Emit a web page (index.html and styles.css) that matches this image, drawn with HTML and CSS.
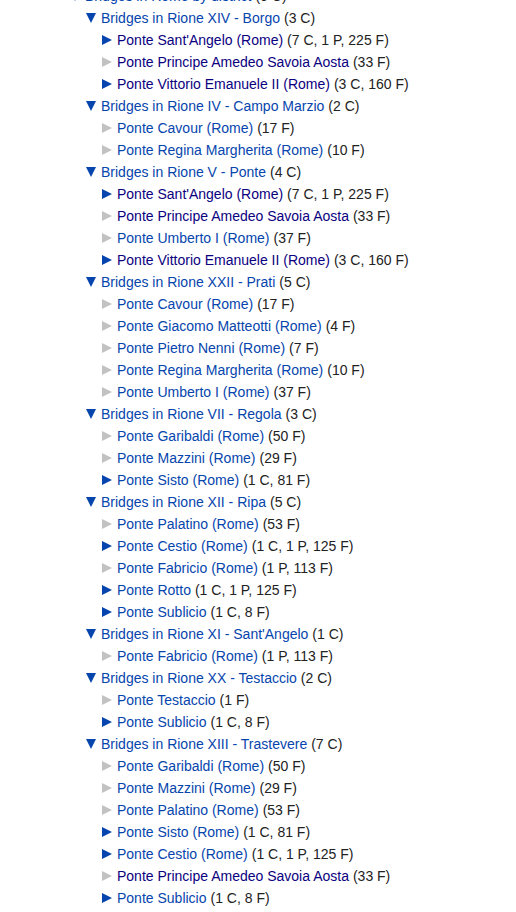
FILE: index.html
```html
<!DOCTYPE html>
<html>
<head>
<meta charset="utf-8">
<link rel="stylesheet" href="styles.css">
</head>
<body>
<div class="tree">
  <div class="item">
    <div class="row"><span class="tog down"></span><a class="cat">Bridges in Rome by district</a><span class="cnt">(9 C)</span></div>
    <div class="children">

      <div class="item">
        <div class="row"><span class="tog down"></span><a class="cat">Bridges in Rione XIV - Borgo</a><span class="cnt">(3 C)</span></div>
        <div class="children">
          <div class="row"><span class="tog right"></span><a class="cat visited">Ponte Sant'Angelo (Rome)</a><span class="cnt">(7 C, 1 P, 225 F)</span></div>
          <div class="row"><span class="tog right empty"></span><a class="cat visited">Ponte Principe Amedeo Savoia Aosta</a><span class="cnt">(33 F)</span></div>
          <div class="row"><span class="tog right"></span><a class="cat visited">Ponte Vittorio Emanuele II (Rome)</a><span class="cnt">(3 C, 160 F)</span></div>
        </div>
      </div>

      <div class="item">
        <div class="row"><span class="tog down"></span><a class="cat">Bridges in Rione IV - Campo Marzio</a><span class="cnt">(2 C)</span></div>
        <div class="children">
          <div class="row"><span class="tog right empty"></span><a class="cat">Ponte Cavour (Rome)</a><span class="cnt">(17 F)</span></div>
          <div class="row"><span class="tog right empty"></span><a class="cat">Ponte Regina Margherita (Rome)</a><span class="cnt">(10 F)</span></div>
        </div>
      </div>

      <div class="item">
        <div class="row"><span class="tog down"></span><a class="cat">Bridges in Rione V - Ponte</a><span class="cnt">(4 C)</span></div>
        <div class="children">
          <div class="row"><span class="tog right"></span><a class="cat visited">Ponte Sant'Angelo (Rome)</a><span class="cnt">(7 C, 1 P, 225 F)</span></div>
          <div class="row"><span class="tog right empty"></span><a class="cat visited">Ponte Principe Amedeo Savoia Aosta</a><span class="cnt">(33 F)</span></div>
          <div class="row"><span class="tog right empty"></span><a class="cat">Ponte Umberto I (Rome)</a><span class="cnt">(37 F)</span></div>
          <div class="row"><span class="tog right"></span><a class="cat visited">Ponte Vittorio Emanuele II (Rome)</a><span class="cnt">(3 C, 160 F)</span></div>
        </div>
      </div>

      <div class="item">
        <div class="row"><span class="tog down"></span><a class="cat">Bridges in Rione XXII - Prati</a><span class="cnt">(5 C)</span></div>
        <div class="children">
          <div class="row"><span class="tog right empty"></span><a class="cat">Ponte Cavour (Rome)</a><span class="cnt">(17 F)</span></div>
          <div class="row"><span class="tog right empty"></span><a class="cat">Ponte Giacomo Matteotti (Rome)</a><span class="cnt">(4 F)</span></div>
          <div class="row"><span class="tog right empty"></span><a class="cat">Ponte Pietro Nenni (Rome)</a><span class="cnt">(7 F)</span></div>
          <div class="row"><span class="tog right empty"></span><a class="cat">Ponte Regina Margherita (Rome)</a><span class="cnt">(10 F)</span></div>
          <div class="row"><span class="tog right empty"></span><a class="cat">Ponte Umberto I (Rome)</a><span class="cnt">(37 F)</span></div>
        </div>
      </div>

      <div class="item">
        <div class="row"><span class="tog down"></span><a class="cat">Bridges in Rione VII - Regola</a><span class="cnt">(3 C)</span></div>
        <div class="children">
          <div class="row"><span class="tog right empty"></span><a class="cat">Ponte Garibaldi (Rome)</a><span class="cnt">(50 F)</span></div>
          <div class="row"><span class="tog right empty"></span><a class="cat">Ponte Mazzini (Rome)</a><span class="cnt">(29 F)</span></div>
          <div class="row"><span class="tog right"></span><a class="cat">Ponte Sisto (Rome)</a><span class="cnt">(1 C, 81 F)</span></div>
        </div>
      </div>

      <div class="item">
        <div class="row"><span class="tog down"></span><a class="cat">Bridges in Rione XII - Ripa</a><span class="cnt">(5 C)</span></div>
        <div class="children">
          <div class="row"><span class="tog right empty"></span><a class="cat">Ponte Palatino (Rome)</a><span class="cnt">(53 F)</span></div>
          <div class="row"><span class="tog right"></span><a class="cat">Ponte Cestio (Rome)</a><span class="cnt">(1 C, 1 P, 125 F)</span></div>
          <div class="row"><span class="tog right empty"></span><a class="cat">Ponte Fabricio (Rome)</a><span class="cnt">(1 P, 113 F)</span></div>
          <div class="row"><span class="tog right"></span><a class="cat">Ponte Rotto</a><span class="cnt">(1 C, 1 P, 125 F)</span></div>
          <div class="row"><span class="tog right"></span><a class="cat">Ponte Sublicio</a><span class="cnt">(1 C, 8 F)</span></div>
        </div>
      </div>

      <div class="item">
        <div class="row"><span class="tog down"></span><a class="cat">Bridges in Rione XI - Sant'Angelo</a><span class="cnt">(1 C)</span></div>
        <div class="children">
          <div class="row"><span class="tog right empty"></span><a class="cat">Ponte Fabricio (Rome)</a><span class="cnt">(1 P, 113 F)</span></div>
        </div>
      </div>

      <div class="item">
        <div class="row"><span class="tog down"></span><a class="cat">Bridges in Rione XX - Testaccio</a><span class="cnt">(2 C)</span></div>
        <div class="children">
          <div class="row"><span class="tog right empty"></span><a class="cat">Ponte Testaccio</a><span class="cnt">(1 F)</span></div>
          <div class="row"><span class="tog right"></span><a class="cat">Ponte Sublicio</a><span class="cnt">(1 C, 8 F)</span></div>
        </div>
      </div>

      <div class="item">
        <div class="row"><span class="tog down"></span><a class="cat">Bridges in Rione XIII - Trastevere</a><span class="cnt">(7 C)</span></div>
        <div class="children">
          <div class="row"><span class="tog right empty"></span><a class="cat">Ponte Garibaldi (Rome)</a><span class="cnt">(50 F)</span></div>
          <div class="row"><span class="tog right empty"></span><a class="cat">Ponte Mazzini (Rome)</a><span class="cnt">(29 F)</span></div>
          <div class="row"><span class="tog right empty"></span><a class="cat">Ponte Palatino (Rome)</a><span class="cnt">(53 F)</span></div>
          <div class="row"><span class="tog right"></span><a class="cat">Ponte Sisto (Rome)</a><span class="cnt">(1 C, 81 F)</span></div>
          <div class="row"><span class="tog right"></span><a class="cat">Ponte Cestio (Rome)</a><span class="cnt">(1 C, 1 P, 125 F)</span></div>
          <div class="row"><span class="tog right empty"></span><a class="cat visited">Ponte Principe Amedeo Savoia Aosta</a><span class="cnt">(33 F)</span></div>
          <div class="row"><span class="tog right"></span><a class="cat">Ponte Sublicio</a><span class="cnt">(1 C, 8 F)</span></div>
        </div>
      </div>

    </div>
  </div>
</div>
</body>
</html>
```

FILE: styles.css
```css
html, body {
  margin: 0;
  padding: 0;
  background: #ffffff;
}
body {
  font-family: "Liberation Sans", Arial, Helvetica, sans-serif;
  font-size: 14px;
  color: #222222;
  overflow: hidden;
}
.tree {
  margin-top: -15px;
  padding-left: 70px;
}
.children {
  padding-left: 16px;
}
.row {
  display: flex;
  align-items: center;
  height: 22px;
  white-space: nowrap;
}
.tog {
  display: inline-block;
  width: 0;
  height: 0;
  flex: none;
}
.tog.down {
  border-left: 5.5px solid transparent;
  border-right: 5.5px solid transparent;
  border-top: 10px solid #0645ad;
  margin-right: 5px;
  margin-top: -1px;
}
.tog.right {
  border-top: 5.5px solid transparent;
  border-bottom: 5.5px solid transparent;
  border-left: 10px solid #0645ad;
  margin-right: 5px;
}
.tog.right.empty {
  border-left-color: #c2c2c2;
}
.cat {
  color: #0645ad;
  text-decoration: none;
}
.cat.visited {
  color: #0b0080;
}
.cnt {
  margin-left: 4px;
  color: #222222;
}
```
